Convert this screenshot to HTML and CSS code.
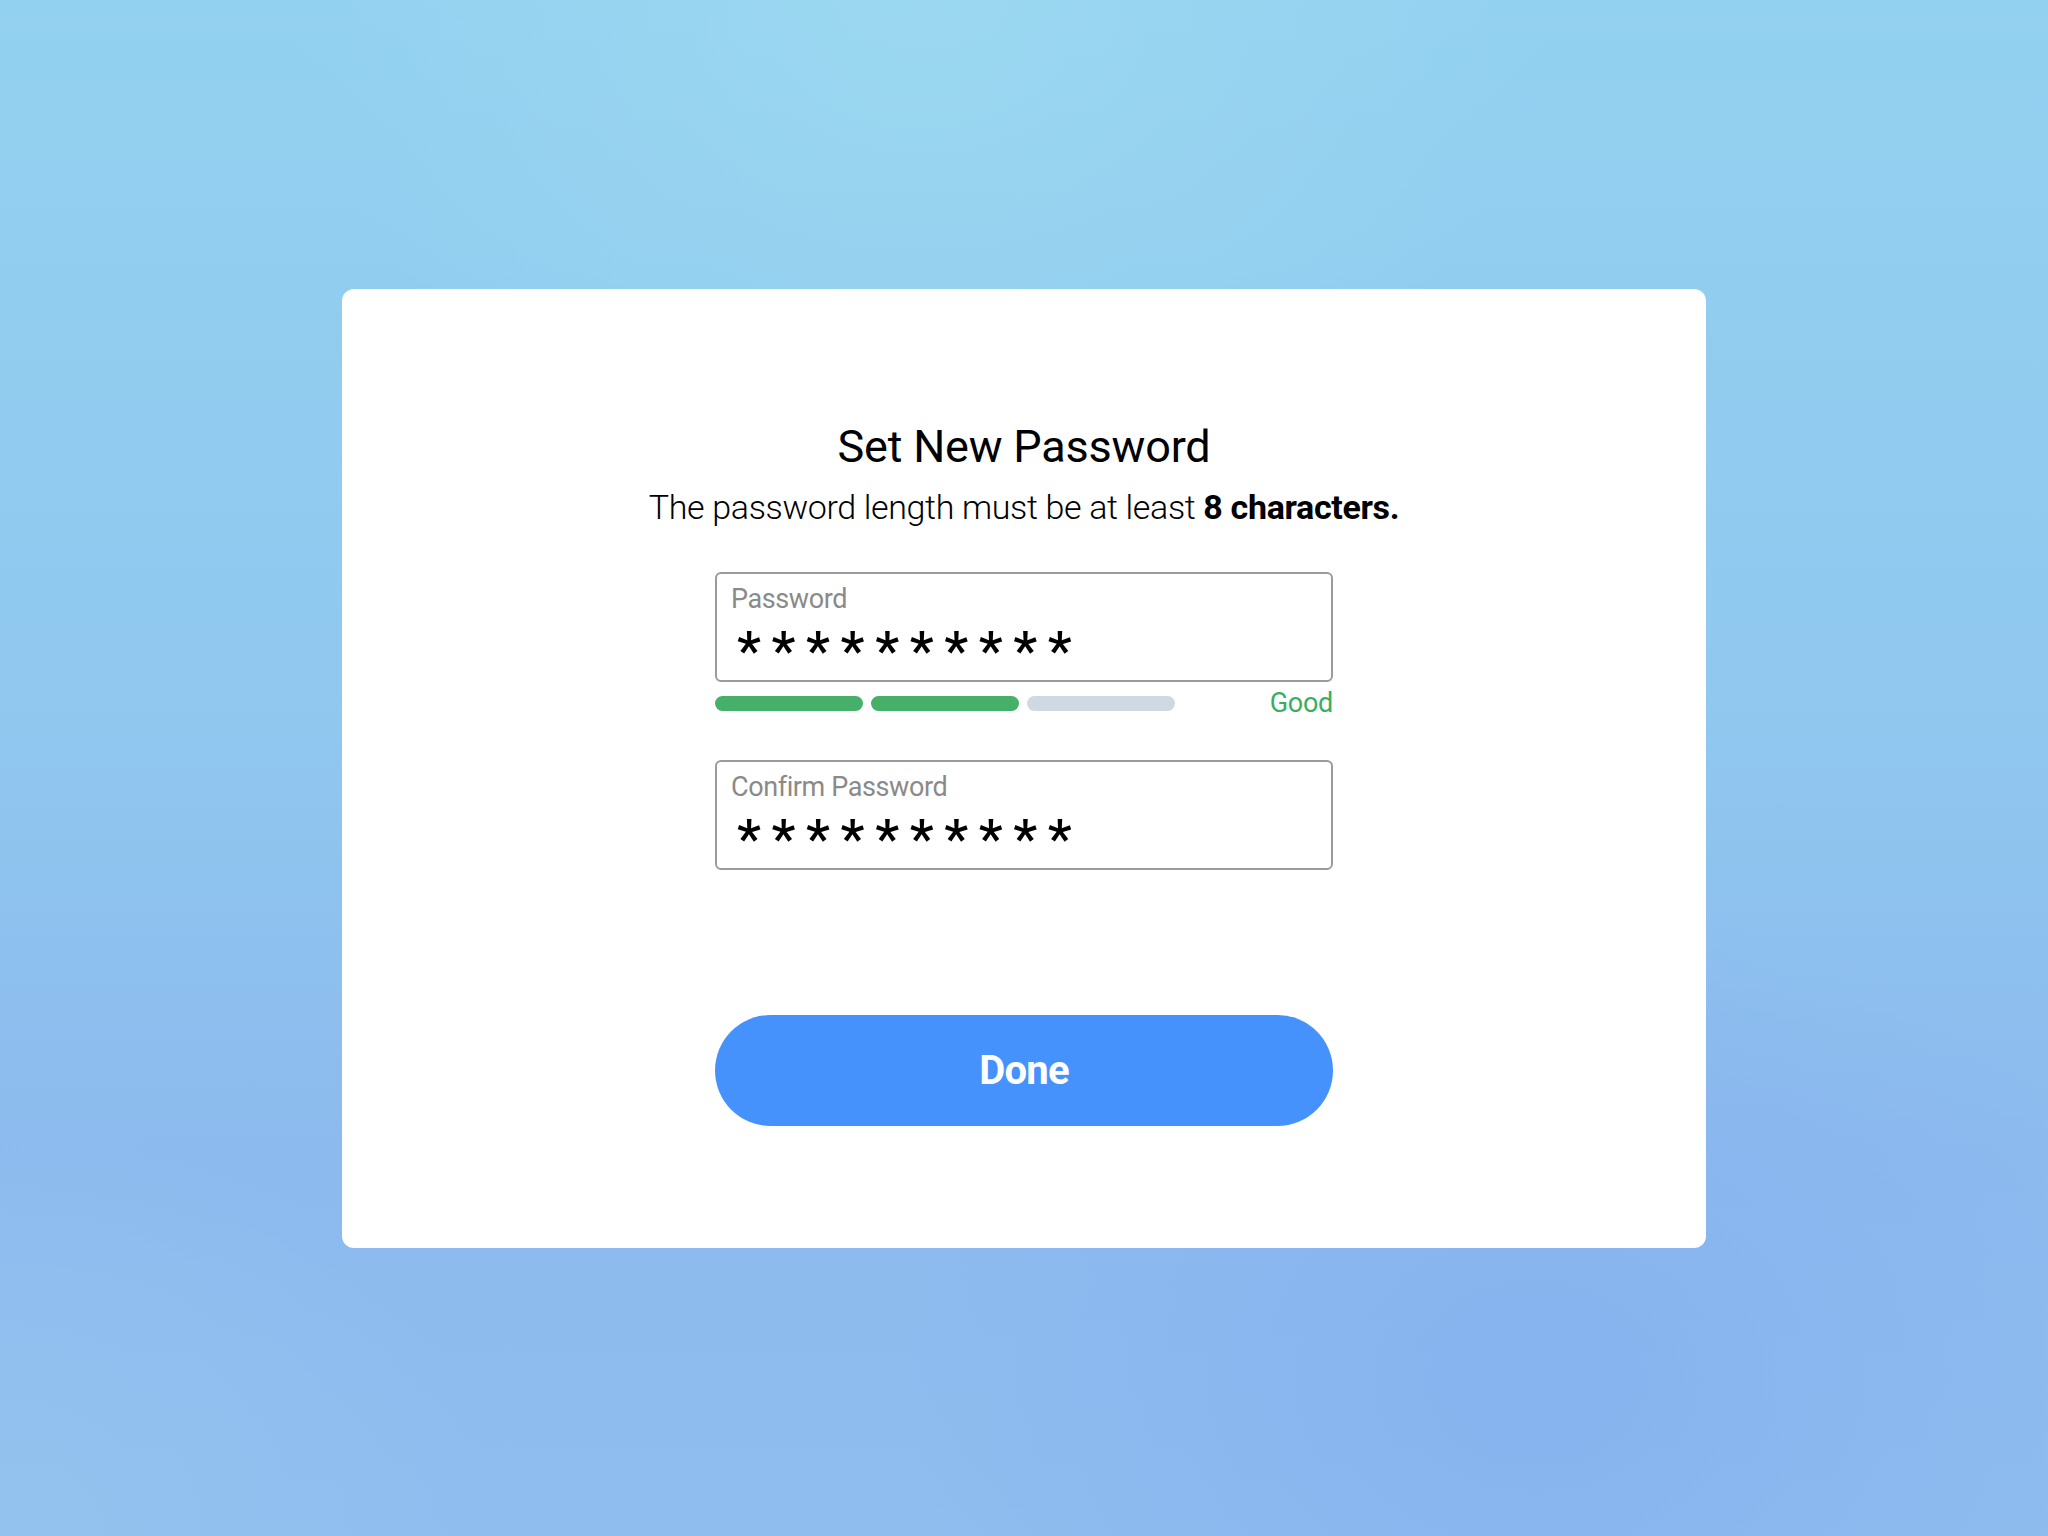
FILE: index.html
```html
<!DOCTYPE html>
<html lang="en">
<head>
<meta charset="utf-8">
<title>Set New Password</title>
<link rel="stylesheet" href="styles.css">
</head>
<body>
  <main class="card">
    <div class="form">
      <h1 class="title">Set New Password</h1>
      <p class="subtitle">The password length must be at least <strong>8 characters.</strong></p>

      <div class="field">
        <div class="field-label">Password</div>
        <div class="field-value">**********</div>
      </div>
      <div class="meter">
        <div class="meter-bars">
          <span class="bar bar-on"></span>
          <span class="bar bar-on"></span>
          <span class="bar"></span>
        </div>
        <span class="meter-label">Good</span>
      </div>

      <div class="field field-confirm">
        <div class="field-label">Confirm Password</div>
        <div class="field-value">**********</div>
      </div>

      <button class="done" type="button">Done</button>
    </div>
  </main>
</body>
</html>
```

FILE: styles.css
```css
* { box-sizing: border-box; }

html, body { height: 100%; }

body {
  margin: 0;
  min-height: 100vh;
  display: flex;
  align-items: center;
  justify-content: center;
  font-family: Roboto, "Liberation Sans", sans-serif;
  color: #000;
  background:
    radial-gradient(ellipse 900px 700px at 45% 0%, rgba(156, 216, 240, 0.9), rgba(156, 216, 240, 0) 70%),
    radial-gradient(ellipse 900px 700px at 75% 90%, rgba(134, 178, 238, 0.9), rgba(134, 178, 238, 0) 70%),
    radial-gradient(ellipse 700px 600px at 0% 100%, rgba(150, 196, 238, 0.8), rgba(150, 196, 238, 0) 70%),
    linear-gradient(180deg, #93d1f0 0%, #90c8ef 45%, #8cbaee 75%, #8fbdee 100%);
}

.card {
  width: 1364px;
  background: #fff;
  border-radius: 12px;
  padding: 131px 0 122px;
  display: flex;
  justify-content: center;
}

.form {
  width: 618px;
  display: flex;
  flex-direction: column;
  align-items: stretch;
}

.title {
  margin: 0;
  font-size: 45px;
  line-height: 53px;
  font-weight: 400;
  text-align: center;
  white-space: nowrap;
  letter-spacing: -0.2px;
}

.subtitle {
  margin: 14px -80px 0;
  font-size: 34px;
  line-height: 40px;
  font-weight: 300;
  text-align: center;
  white-space: nowrap;
  letter-spacing: -0.35px;
}

.subtitle strong { font-weight: 700; }

.field {
  margin-top: 45px;
  height: 110px;
  border: 2px solid #9b9b9b;
  border-radius: 6px;
  padding: 9px 14px 0;
}

.field-confirm { margin-top: 43px; }

.field-label {
  font-size: 27px;
  line-height: 32px;
  color: #8a8a8a;
  letter-spacing: -0.4px;
}

.field-value {
  margin-top: 9px;
  padding-left: 6px;
  font-size: 54px;
  line-height: 54px;
  height: 40px;
  letter-spacing: 10.6px;
  font-weight: 500;
  color: #000;
}

.meter {
  margin-top: 8px;
  height: 27px;
  display: flex;
  align-items: center;
  justify-content: space-between;
}

.meter-bars {
  display: flex;
  gap: 8px;
}

.bar {
  width: 148px;
  height: 15px;
  border-radius: 8px;
  background: #cfd9e4;
}

.bar-on { background: #46b06a; }

.meter-label {
  font-size: 27px;
  line-height: 27px;
  color: #3aae5e;
  letter-spacing: -0.3px;
}

.done {
  margin-top: 145px;
  height: 111px;
  border: 0;
  border-radius: 56px;
  background: #4592fd;
  color: #fff;
  font-family: Roboto, "Liberation Sans", sans-serif;
  font-size: 40px;
  font-weight: 700;
  letter-spacing: -0.8px;
  cursor: pointer;
}
```
